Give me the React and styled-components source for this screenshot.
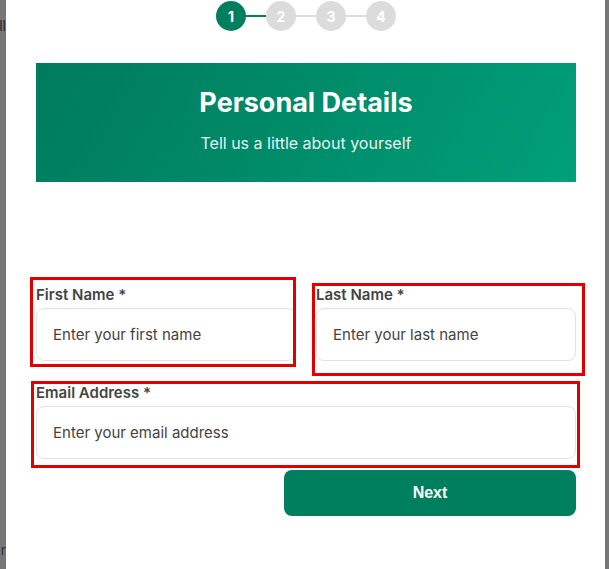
import React from 'react';
import styled, { createGlobalStyle } from 'styled-components';

const GlobalStyle = createGlobalStyle`
  body {
    margin: 0;
    font-family: Inter, "Noto Sans", sans-serif;
    background: #777;
  }
`;

const Page = styled.div`
  display: flex;
  width: 609px;
  height: 569px;
  background: #777;
  overflow: hidden;
`;

const Backdrop = styled.div`
  width: ${(p) => p.$width}px;
  flex-shrink: 0;
  display: flex;
  flex-direction: column;
  overflow: hidden;
  background: #777;
`;

const BackdropLine = styled.div`
  display: flex;
  justify-content: flex-end;
  white-space: nowrap;
  font-size: 14px;
  line-height: 16px;
  color: ${(p) => p.$color};
  margin-top: ${(p) => p.$top};
  margin-bottom: ${(p) => p.$bottom || '0'};
`;

const Panel = styled.div`
  width: 599px;
  flex-shrink: 0;
  min-width: 0;
  background: #fff;
  padding: 1px 29px 0 30px;
  box-sizing: border-box;
`;

const Steps = styled.div`
  display: flex;
  justify-content: center;
  align-items: center;
`;

const StepDot = styled.div`
  width: 30px;
  height: 30px;
  border-radius: 50%;
  background: ${(p) => (p.$active ? '#007f5f' : '#dcdcdc')};
  color: #fff;
  font-size: 14px;
  font-weight: 700;
  display: flex;
  align-items: center;
  justify-content: center;
`;

const StepLine = styled.div`
  width: 20px;
  height: 2px;
  background: ${(p) => (p.$active ? '#007f5f' : '#dcdcdc')};
`;

const Header = styled.div`
  margin-top: 32px;
  height: 119px;
  box-sizing: border-box;
  padding: 24px 20px 0;
  background: linear-gradient(120deg, #007b5e 0%, #008a68 45%, #00a07a 100%);
  text-align: center;
  color: #fff;
`;

const Title = styled.h1`
  margin: 0;
  font-size: 27px;
  line-height: 31px;
  font-weight: 700;
`;

const Subtitle = styled.p`
  margin: 16px 0 0;
  font-size: 16px;
  line-height: 1.2;
  color: rgba(255, 255, 255, 0.92);
`;

const Form = styled.form`
  margin-top: 103px;
  display: grid;
  grid-template-columns: minmax(0, 1fr) minmax(0, 1fr);
  column-gap: 20px;
  row-gap: 22px;
`;

const Field = styled.div`
  position: relative;
  min-width: 0;
  display: flex;
  flex-direction: column;
  grid-column: ${(p) => (p.$wide ? '1 / -1' : 'auto')};

  &::after {
    content: '';
    position: absolute;
    top: ${(p) => p.$box[0]}px;
    right: ${(p) => p.$box[1]}px;
    bottom: ${(p) => p.$box[2]}px;
    left: ${(p) => p.$box[3]}px;
    border: 3px solid #e00000;
    pointer-events: none;
  }
`;

const Label = styled.label`
  font-size: 15px;
  line-height: 20px;
  font-weight: 600;
  color: #444;
  margin-bottom: 3px;
`;

const Input = styled.input`
  width: 100%;
  min-width: 0;
  height: 53px;
  box-sizing: border-box;
  border: 1px solid #e2e2e2;
  border-radius: 8px;
  padding: 0 16px;
  font-family: Inter, "Noto Sans", sans-serif;
  font-size: 15px;
  color: #333;
  background: #fff;
  outline: none;

  &::placeholder {
    color: #444;
  }
`;

const Actions = styled.div`
  grid-column: 1 / -1;
  display: flex;
  justify-content: flex-end;
  margin-top: -11px;
`;

const NextButton = styled.button`
  width: 292px;
  height: 46px;
  border: none;
  border-radius: 8px;
  background: #007f5f;
  color: #fff;
  font-family: "Liberation Sans", Arial, sans-serif;
  font-size: 16px;
  font-weight: 700;
  cursor: pointer;
`;

const steps = [1, 2, 3, 4];

function App() {
  return (
    <>
      <GlobalStyle />
      <Page>
        <Backdrop $width={6}>
          <BackdropLine $color="#1c2436" $top="18px">Install</BackdropLine>
          <BackdropLine $color="#333" $top="auto" $bottom="11px">Color</BackdropLine>
        </Backdrop>
        <Panel>
          <Steps>
            {steps.map((n, i) => (
              <React.Fragment key={n}>
                {i > 0 && <StepLine $active={i === 1} />}
                <StepDot $active={n === 1}>{n}</StepDot>
              </React.Fragment>
            ))}
          </Steps>
          <Header>
            <Title>Personal Details</Title>
            <Subtitle>Tell us a little about yourself</Subtitle>
          </Header>
          <Form onSubmit={(e) => e.preventDefault()}>
            <Field $box={[-8, 0, -6, -6]}>
              <Label>First Name *</Label>
              <Input placeholder="Enter your first name" />
            </Field>
            <Field $box={[-2, -9, -15, -4]}>
              <Label>Last Name *</Label>
              <Input placeholder="Enter your last name" />
            </Field>
            <Field $wide $box={[-2, -4, -9, -5]}>
              <Label>Email Address *</Label>
              <Input type="email" placeholder="Enter your email address" />
            </Field>
            <Actions>
              <NextButton type="submit">Next</NextButton>
            </Actions>
          </Form>
        </Panel>
        <Backdrop $width={4} />
      </Page>
    </>
  );
}

export default App;
